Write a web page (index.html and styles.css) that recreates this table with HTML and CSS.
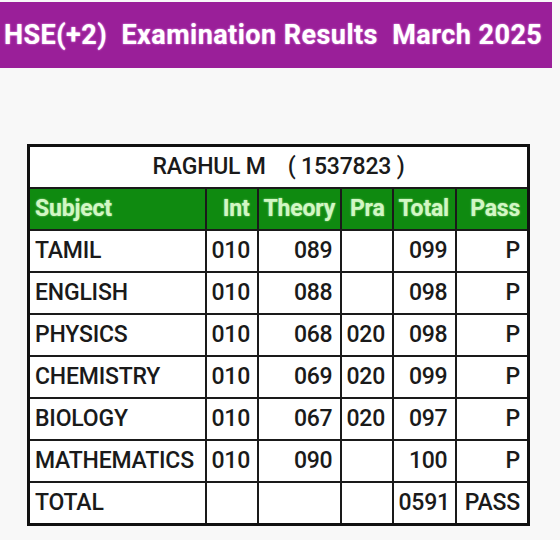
FILE: index.html
```html
<!DOCTYPE html>
<html>
<head>
<meta charset="utf-8">
<link rel="stylesheet" href="styles.css">
</head>
<body>
<div class="banner"><span class="title">HSE(+2)  Examination Results  March 2025</span></div>
<div class="content">
<table class="marks">
<colgroup>
<col class="c-sub"><col class="c-int"><col class="c-th"><col class="c-pra"><col class="c-tot"><col class="c-pass">
</colgroup>
<tr class="name-row"><td colspan="6"><span class="name">RAGHUL M    ( 1537823 )</span></td></tr>
<tr class="head">
<th class="left">Subject</th><th>Int</th><th>Theory</th><th>Pra</th><th>Total</th><th>Pass</th>
</tr>
<tr><td class="left">TAMIL</td><td>010</td><td>089</td><td></td><td>099</td><td>P</td></tr>
<tr><td class="left">ENGLISH</td><td>010</td><td>088</td><td></td><td>098</td><td>P</td></tr>
<tr><td class="left">PHYSICS</td><td>010</td><td>068</td><td>020</td><td>098</td><td>P</td></tr>
<tr><td class="left">CHEMISTRY</td><td>010</td><td>069</td><td>020</td><td>099</td><td>P</td></tr>
<tr><td class="left">BIOLOGY</td><td>010</td><td>067</td><td>020</td><td>097</td><td>P</td></tr>
<tr><td class="left">MATHEMATICS</td><td>010</td><td>090</td><td></td><td>100</td><td>P</td></tr>
<tr class="total"><td class="left">TOTAL</td><td></td><td></td><td></td><td>0591</td><td>PASS</td></tr>
</table>
</div>
</body>
</html>
```
FILE: styles.css
```css
html, body {
  margin: 0;
  padding: 0;
  background: #f8f8f8;
  font-family: Roboto, "Liberation Sans", sans-serif;
}
body {
  padding-top: 2px;
}
.banner {
  width: 552px;
  height: 66px;
  background: #9a1f99;
  box-sizing: border-box;
  padding-left: 4px;
  display: flex;
  align-items: center;
}
.title {
  white-space: pre;
  color: #fff;
  font-weight: 700;
  font-size: 27px;
  letter-spacing: 0.45px;
  text-shadow: 0 0 2px rgba(255, 190, 255, 0.9);
}
.content {
  padding-top: 76px;
  padding-left: 27px;
}
.marks {
  border-collapse: collapse;
  table-layout: fixed;
  width: 500px;
  background: #fff;
  border: 3px solid #111;
}
.c-sub { width: 177px; }
.c-int { width: 52px; }
.c-th { width: 83px; }
.c-pra { width: 52px; }
.c-tot { width: 63px; }
.c-pass { width: 73px; }
.marks td, .marks th {
  border: 2px solid #1a1a1a;
  height: 42px;
  padding: 0 7px 0 5px;
  box-sizing: border-box;
  font-size: 23px;
  font-weight: 500;
  color: #1a1a1a;
  text-align: right;
  white-space: nowrap;
  letter-spacing: -0.2px;
}
.marks .left {
  text-align: left;
}
.name-row td {
  text-align: center;
  padding: 0;
}
.name {
  white-space: pre;
}
.head th {
  background: #0f8a10;
  color: #d2f7c4;
  font-weight: 700;
  text-shadow: 0 0 2px rgba(220, 255, 200, 0.7);
}
.total td {
  height: 43px;
}
```
